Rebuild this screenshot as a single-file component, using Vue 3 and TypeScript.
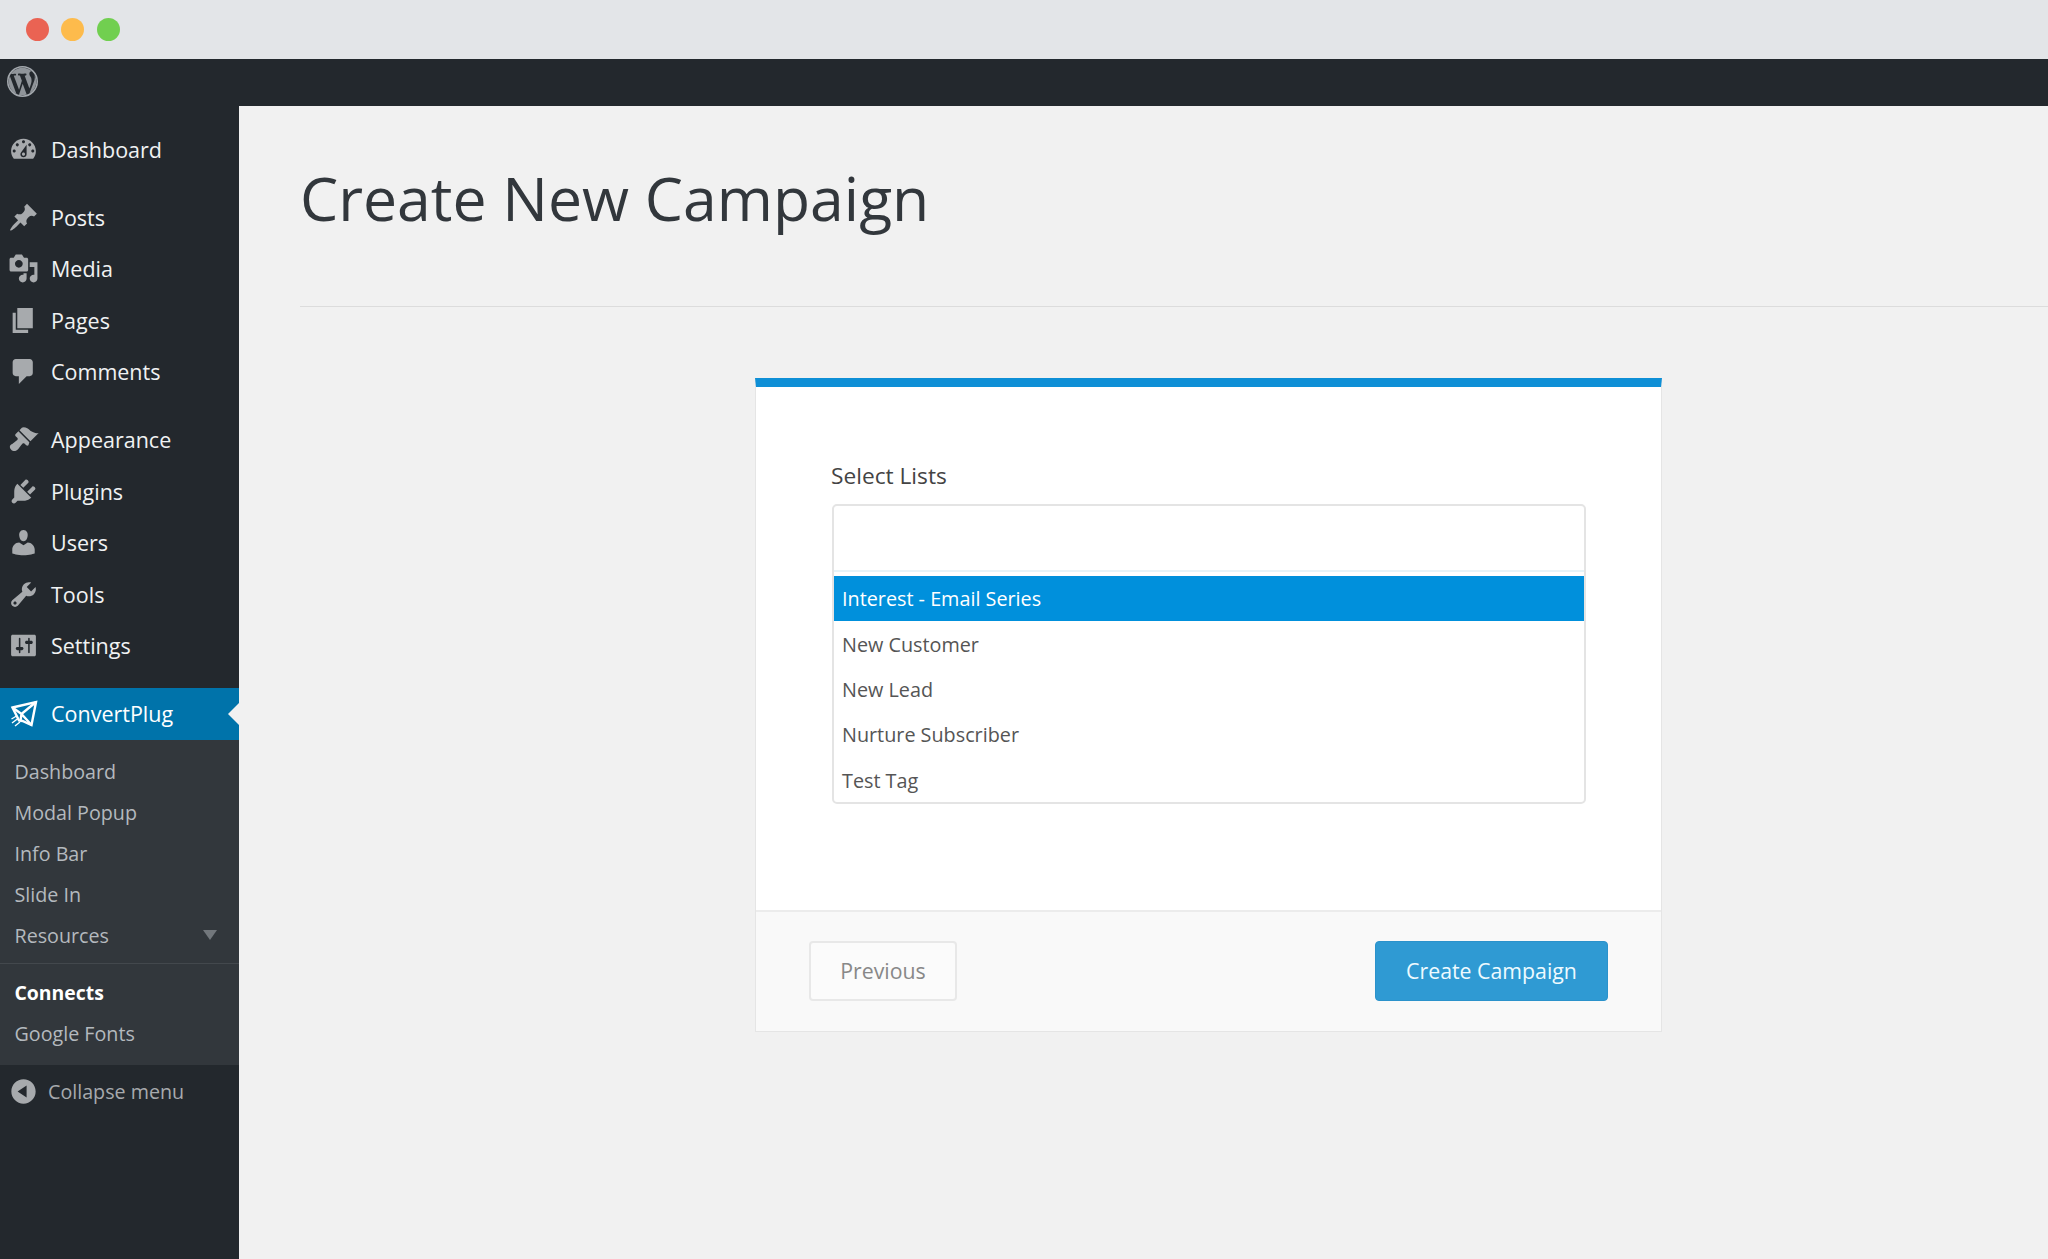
<script setup lang="ts">
const icons: Record<string, string> = {
  dashboard: 'M3.76 16h12.48c1.1-1.37 1.76-3.11 1.76-5 0-4.42-3.58-8-8-8s-8 3.58-8 8c0 1.89.66 3.63 1.76 5zM10 4c.55 0 1 .45 1 1s-.45 1-1 1-1-.45-1-1 .45-1 1-1zM6 6c.55 0 1 .45 1 1s-.45 1-1 1-1-.45-1-1 .45-1 1-1zm8 0c.55 0 1 .45 1 1s-.45 1-1 1-1-.45-1-1 .45-1 1-1zm-5.37 5.55L12 7v6c0 1.1-.9 2-2 2s-2-.9-2-2c0-.57.24-1.08.63-1.45zM4 10c.55 0 1 .45 1 1s-.45 1-1 1-1-.45-1-1 .45-1 1-1zm12 0c.55 0 1 .45 1 1s-.45 1-1 1-1-.45-1-1 .45-1 1-1zm-5 3c0-.55-.45-1-1-1s-1 .45-1 1 .45 1 1 1 1-.45 1-1z',
  pin: 'M10.44 3.02l1.82-1.82 6.36 6.35-1.83 1.82c-1.05-.68-2.48-.57-3.41.36l-.75.75c-.92.93-1.04 2.35-.35 3.41l-1.83 1.82-2.41-2.41-2.8 2.79c-.42.42-3.38 2.71-3.8 2.29s1.86-3.39 2.28-3.81l2.79-2.79L4.1 9.36l1.83-1.82c1.05.69 2.48.57 3.4-.36l.75-.75c.93-.92 1.05-2.35.36-3.41z',
  media: 'M13 11V4c0-.55-.45-1-1-1h-1.67L9 1H5L3.67 3H2c-.55 0-1 .45-1 1v7c0 .55.45 1 1 1h10c.55 0 1-.45 1-1zM7 4.5c1.38 0 2.5 1.12 2.5 2.5S8.38 9.5 7 9.5 4.5 8.38 4.5 7 5.62 4.5 7 4.5zM14 6h5v10.5c0 1.38-1.12 2.5-2.5 2.5S14 17.88 14 16.5s1.12-2.5 2.5-2.5c.17 0 .34.02.5.05V9h-3V6zm-4 8.05V13h2v3.5c0 1.38-1.12 2.5-2.5 2.5S7 17.88 7 16.5 8.12 14 9.5 14c.17 0 .34.02.5.05z',
  page: 'M6 15V2h10v13H6zm-1 1h8v2H3V5h2v11z',
  comments: 'M5 2h9c1.1 0 2 .9 2 2v7c0 1.1-.9 2-2 2h-2l-5 5v-5H5c-1.1 0-2-.9-2-2V4c0-1.1.9-2 2-2z',
  appearance: 'M14.48 11.06L7.41 3.99l1.5-1.5c.5-.56 2.3-.47 3.51.32 1.21.8 1.43 1.28 2.91 2.1 1.18.64 2.45 1.26 4.45.85zm-.71.71L6.7 4.7 4.93 6.47c-.39.39-.39 1.02 0 1.41l1.06 1.06c.39.39.39 1.03 0 1.42-.6.6-1.43 1.11-2.21 1.69-.35.26-.7.53-1.01.84C1.43 13.23.4 14.86 2.1 16.56c1.7 1.7 3.33.67 4.67-.67.31-.31.58-.66.84-1.01.58-.78 1.09-1.61 1.69-2.21.39-.39 1.03-.39 1.42 0l1.06 1.06c.39.39 1.02.39 1.41 0z',
  plugins: 'M13.11 4.36L9.87 7.6 8 5.73l3.24-3.24c.35-.34 1.05-.2 1.56.32.52.51.66 1.21.31 1.55zm-8 1.77l.91-1.12 9.01 9.01-1.19.84c-.71.71-2.63 1.16-3.82 1.16H6.14L4.9 17.26c-.59.59-1.54.59-2.12 0-.59-.58-.59-1.53 0-2.12l1.24-1.24v-3.88c0-1.13.4-3.19 1.09-3.89zm7.26 3.97l3.24-3.24c.34-.35 1.04-.21 1.55.31.52.51.66 1.21.31 1.55l-3.24 3.25z',
  users: 'M10 9.25c-2.27 0-2.73-3.44-2.73-3.44C7 4.02 7.82 2 9.97 2c2.16 0 2.98 2.02 2.71 3.81 0 0-.41 3.44-2.68 3.44zm0 2.57L12.72 10c2.39 0 4.52 2.33 4.52 4.53v2.49s-3.65 1.13-7.24 1.13c-3.65 0-7.24-1.13-7.24-1.13v-2.49c0-2.25 1.94-4.48 4.47-4.48z',
  tools: 'M16.68 9.77c-1.34 1.34-3.3 1.67-4.95.99l-5.41 6.52c-.99.99-2.59.99-3.58 0s-.99-2.59 0-3.57l6.52-5.42c-.68-1.65-.35-3.61.99-4.95 1.28-1.28 3.12-1.62 4.72-1.06l-2.89 2.89 2.82 2.82 2.86-2.87c.53 1.58.18 3.39-1.08 4.65zM3.81 16.21c.4.39 1.04.39 1.43 0 .4-.4.4-1.04 0-1.43-.39-.4-1.03-.4-1.43 0-.39.39-.39 1.03 0 1.43z',
  settings: 'M18 16V4c0-.55-.45-1-1-1H3c-.55 0-1 .45-1 1v12c0 .55.45 1 1 1h14c.55 0 1-.45 1-1zM8 11h1c.55 0 1 .45 1 1s-.45 1-1 1H8v1.5c0 .28-.22.5-.5.5s-.5-.22-.5-.5V13H6c-.55 0-1-.45-1-1s.45-1 1-1h1V5.5c0-.28.22-.5.5-.5s.5.22.5.5V11zm5-2h-1c-.55 0-1-.45-1-1s.45-1 1-1h1V5.5c0-.28.22-.5.5-.5s.5.22.5.5V7h1c.55 0 1 .45 1 1s-.45 1-1 1h-1v5.5c0 .28-.22.5-.5.5s-.5-.22-.5-.5V9z',
  collapse: 'M10 2.16c4.33 0 7.84 3.51 7.84 7.84s-3.51 7.84-7.84 7.84S2.16 14.33 2.16 10 5.71 2.16 10 2.16zm2 11.72V6.12L6.18 9.97z',
  wp: 'M20 10c0-5.51-4.49-10-10-10C4.48 0 0 4.49 0 10c0 5.52 4.48 10 10 10 5.51 0 10-4.48 10-10zM7.78 15.37L4.37 6.22c.55-.02 1.17-.08 1.17-.08.5-.06.44-1.13-.06-1.11 0 0-1.45.11-2.37.11-.18 0-.37 0-.58-.01C4.12 2.69 6.87 1.11 10 1.11c2.33 0 4.45.87 6.05 2.34-.68-.11-1.65.39-1.65 1.58 0 .74.45 1.36.9 2.1.35.61.55 1.36.55 2.46 0 1.49-1.4 5-1.4 5l-3.03-8.37c.54-.02.82-.17.82-.17.5-.05.44-1.25-.06-1.22 0 0-1.44.12-2.38.12-.87 0-2.33-.12-2.33-.12-.5-.03-.56 1.2-.06 1.22l.92.08 1.26 3.41zM17.41 10c.24-.64.74-1.87.43-4.25.7 1.29 1.05 2.71 1.05 4.25 0 3.29-1.73 6.24-4.4 7.78.97-2.59 1.94-5.2 2.92-7.78zM6.1 18.09C3.12 16.65 1.11 13.53 1.11 10c0-1.3.23-2.48.72-3.59C3.25 10.3 4.67 14.2 6.1 18.09zm4.03-6.63l2.58 6.98c-.86.29-1.76.45-2.71.45-.79 0-1.57-.11-2.29-.33.81-2.38 1.62-4.74 2.42-7.1z',
}
interface Item { label: string; icon: string }
const groups: Item[][] = [
  [{ label: 'Dashboard', icon: 'dashboard' }],
  [
    { label: 'Posts', icon: 'pin' },
    { label: 'Media', icon: 'media' },
    { label: 'Pages', icon: 'page' },
    { label: 'Comments', icon: 'comments' },
  ],
  [
    { label: 'Appearance', icon: 'appearance' },
    { label: 'Plugins', icon: 'plugins' },
    { label: 'Users', icon: 'users' },
    { label: 'Tools', icon: 'tools' },
    { label: 'Settings', icon: 'settings' },
  ],
]
const subTop = ['Dashboard', 'Modal Popup', 'Info Bar', 'Slide In', 'Resources']
const subBottom = ['Connects', 'Google Fonts']
const lists = ['Interest - Email Series', 'New Customer', 'New Lead', 'Nurture Subscriber', 'Test Tag']
</script>

<template>
  <div class="page">
    <header class="titlebar">
      <span class="dot red"></span>
      <span class="dot yellow"></span>
      <span class="dot green"></span>
    </header>
    <div class="adminbar">
      <svg class="wp" viewBox="0 0 20 20">
        <circle cx="10" cy="10" r="9.4" fill="#8f9499" />
        <path :d="icons.wp" fill-rule="evenodd" fill="#23282d" />
        <circle cx="10" cy="10" r="9.5" fill="none" stroke="#a3a8ad" stroke-width="1" />
      </svg>
    </div>
    <div class="body">
      <aside class="sidebar">
        <ul v-for="(group, g) in groups" :key="g" class="group">
          <li v-for="item in group" :key="item.label" class="item">
            <svg class="icon" viewBox="0 0 20 20"><path :d="icons[item.icon]" fill-rule="evenodd" /></svg>
            <span>{{ item.label }}</span>
          </li>
        </ul>
        <div class="item active">
          <svg class="icon plane" viewBox="0 0 28 28" fill="none" stroke="#fff" stroke-width="2.4" stroke-linejoin="miter">
            <path d="M2.5 7.5L26 2l-4.5 23-9-4-3.5-.5z" />
            <path d="M2.5 7.5l9 6.5L26 2M11.5 14l-1 6.5M11.5 14l10 11" />
            <path d="M1.5 19l5-3M2 23l6-4.5M5 26l5-4" stroke-width="1.4" />
          </svg>
          <span>ConvertPlug</span>
        </div>
        <div class="submenu">
          <ul class="sublist">
            <li v-for="s in subTop" :key="s" class="subitem">
              <span>{{ s }}</span>
              <i v-if="s === 'Resources'" class="caret"></i>
            </li>
          </ul>
          <ul class="sublist second">
            <li v-for="s in subBottom" :key="s" class="subitem" :class="{ current: s === 'Connects' }">{{ s }}</li>
          </ul>
        </div>
        <div class="collapse">
          <svg class="icon" viewBox="0 0 20 20"><path :d="icons.collapse" fill-rule="evenodd" /></svg>
          <span>Collapse menu</span>
        </div>
      </aside>
      <main class="main">
        <h1 class="title">Create New Campaign</h1>
        <div class="rule"></div>
        <section class="card">
          <div class="card-body">
            <label class="label">Select Lists</label>
            <div class="select">
              <div class="search"></div>
              <ul class="options">
                <li v-for="(l, i) in lists" :key="l" class="option" :class="{ selected: i === 0 }">{{ l }}</li>
              </ul>
            </div>
          </div>
          <footer class="card-foot">
            <button class="btn prev">Previous</button>
            <button class="btn create">Create Campaign</button>
          </footer>
        </section>
      </main>
    </div>
  </div>
</template>

<style>
html, body { margin: 0; background: #f1f1f1; }
</style>

<style scoped>
.page {
  width: 2048px;
  height: 1259px;
  overflow: hidden;
  display: flex;
  flex-direction: column;
  font-family: "Open Sans", "Noto Sans", sans-serif;
  background: #f1f1f1;
}
ul { list-style: none; margin: 0; padding: 0; }
.titlebar {
  height: 59px;
  flex: none;
  background: #e3e5e8;
  display: flex;
  align-items: center;
  gap: 12px;
  padding-left: 26px;
}
.dot { width: 23px; height: 23px; border-radius: 50%; }
.red { background: #ea6353; }
.yellow { background: #fdbb4c; }
.green { background: #71cf50; margin-left: 0.5px; }
.adminbar {
  height: 47px;
  box-sizing: border-box;
  padding: 0 0 2px 7px;
  flex: none;
  background: #23282d;
  display: flex;
  align-items: center;
}
.wp { width: 31px; height: 31px; }
.body { flex: 1; display: flex; min-height: 0; }
.sidebar {
  width: 239px;
  flex: none;
  background: #23282d;
  padding-top: 17.5px;
  box-sizing: border-box;
}
.group { margin-bottom: 16.5px; }
.item {
  height: 51.5px;
  display: flex;
  align-items: center;
  color: #f0f2f3;
  font-size: 21.5px;
  position: relative;
}
.icon {
  width: 31px;
  height: 31px;
  flex: none;
  margin-left: 8px;
  margin-right: 12px;
  fill: #a7aaad;
}
.active { background: #0073aa; color: #fff; margin-top: 1px; }
.active::after {
  content: "";
  position: absolute;
  right: 0;
  top: 50%;
  margin-top: -11px;
  border: 11px solid transparent;
  border-left-width: 0;
  border-right-color: #f1f1f1;
}
.plane { width: 28px; height: 28px; margin-left: 10px; margin-right: 13px; fill: none; }
.submenu { background: #32373c; padding: 11px 0 11.5px; }
.sublist { border-bottom: 1px solid #43484d; padding-bottom: 7.5px; }
.sublist.second { border-bottom: 0; padding: 7.5px 0 0; }
.subitem {
  height: 41px;
  display: flex;
  align-items: center;
  justify-content: space-between;
  padding: 0 22px 0 14.5px;
  color: #b4b9be;
  font-size: 19.7px;
}
.current { color: #fff; font-weight: 700; font-size: 19.4px; }
.caret {
  width: 0;
  height: 0;
  border: 7px solid transparent;
  border-top: 10px solid #72777c;
  border-bottom: 0;
}
.collapse {
  height: 52px;
  display: flex;
  align-items: center;
  color: #a7aaad;
  font-size: 19.7px;
}
.collapse .icon { margin-right: 9px; }
.main { flex: 1; padding-left: 61px; min-width: 0; }
.title {
  margin: 0;
  padding-top: 50px;
  height: 200px;
  box-sizing: border-box;
  font-size: 60.7px;
  line-height: 84px;
  font-weight: 400;
  color: #32373c;
  white-space: nowrap;
}
.rule { height: 1px; background: #dcdcdc; }
.card {
  width: 907px;
  height: 654px;
  margin: 71px 0 0 455px;
  box-sizing: border-box;
  border: 1px solid #e5e5e5;
  border-top: 9px solid #0e8fd6;
  background: #fff;
  display: flex;
  flex-direction: column;
}
.card-body { flex: 1; padding: 73px 76px 0; }
.label {
  display: block;
  font-size: 22.7px;
  line-height: 32px;
  color: #444;
  margin: 0 0 12px -1px;
}
.select {
  width: 754px;
  height: 300px;
  box-sizing: border-box;
  border: 2px solid #e4e4e4;
  border-radius: 5px;
  overflow: hidden;
}
.search { height: 64px; border-bottom: 2px solid #e6f3f8; }
.options { padding-top: 4px; }
.option {
  height: 45.4px;
  display: flex;
  align-items: center;
  padding-left: 8px;
  font-size: 19.8px;
  color: #555;
}
.selected { background: #0090dc; color: #fff; font-weight: 500; }
.card-foot {
  height: 121px;
  box-sizing: border-box;
  border-top: 2px solid #ececec;
  background: #f9f9f9;
  display: flex;
  align-items: center;
  justify-content: space-between;
  padding: 0 53px 2px;
}
.btn {
  height: 60px;
  font-family: inherit;
  font-size: 21.3px;
  border-radius: 4px;
  padding: 0;
}
.prev {
  width: 148px;
  background: #fbfbfb;
  border: 2px solid #e8e8e8;
  color: #888;
}
.create {
  width: 233px;
  background: #2f9ad3;
  border: 1px solid #2b92cb;
  color: #eefaff;
}
</style>
